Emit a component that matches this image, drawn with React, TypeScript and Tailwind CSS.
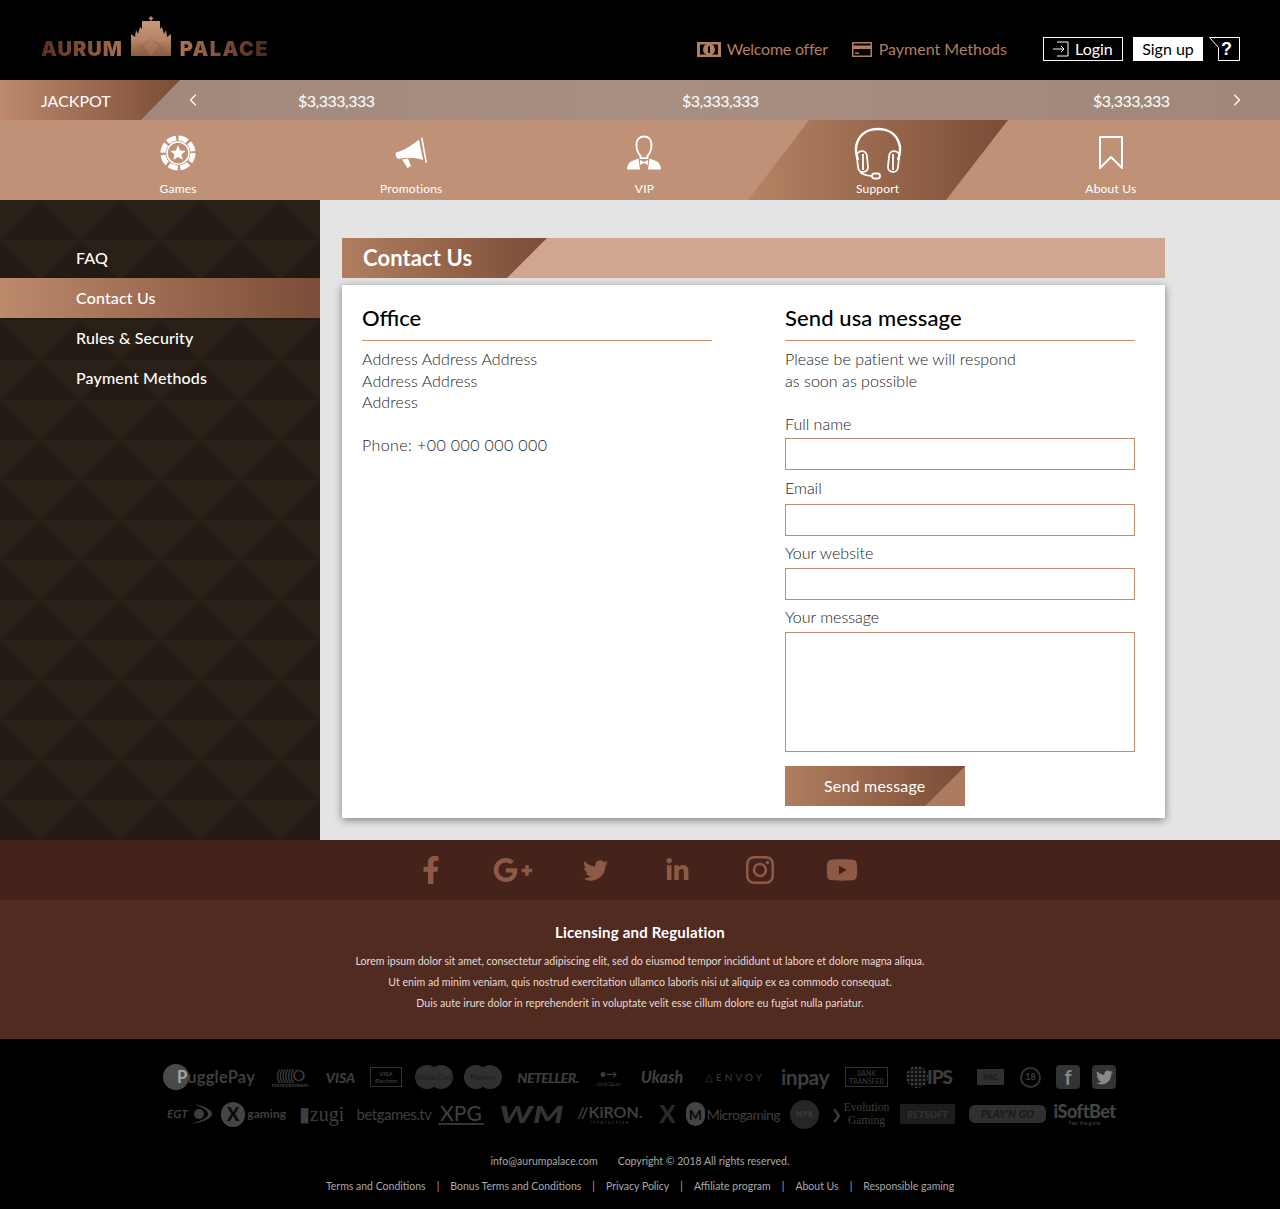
import type { ReactNode } from "react";
import { FaFacebookF, FaGooglePlusG, FaInstagram, FaLinkedinIn, FaTwitter, FaYoutube } from "react-icons/fa";
import { ChevronLeft, ChevronRight } from "lucide-react";

function Crown() {
  return (
    <svg width="40" height="41" viewBox="0 0 40 41" className="block">
      <defs>
        <linearGradient id="crown" x1="0" y1="0" x2="0" y2="1">
          <stop offset="0" stopColor="#c89878" />
          <stop offset="0.55" stopColor="#b58467" />
          <stop offset="1" stopColor="#8a5a42" />
        </linearGradient>
      </defs>
      <path d="M20 0l2.500 2.500-2 1.500v1.500h-1V4l-2-1.500z" fill="#b98a6c" />
      <path d="M11 5H29V13L31 11 33 18 35 14 36 21 40 18V40H0V18L4 21 5 14 7 18 9 11 11 13Z" fill="url(#crown)" />
      <path d="M20 22L34 32 30 40H10L6 32Z" fill="#8f5f46" opacity=".4" />
      <path d="M20 22L27 30 20 40 13 30Z" fill="#c79a7d" opacity=".25" />
    </svg>
  );
}

function Chip() {
  return (
    <svg width="36" height="36" viewBox="0 0 36 36">
      <circle cx="18" cy="18" r="15" fill="none" stroke="#fff" strokeWidth="5" strokeDasharray="9.300 2.500" />
      <circle cx="18" cy="18" r="11" fill="none" stroke="#fff" strokeWidth="1.500" />
      <circle cx="18" cy="18" r="9.500" fill="#bf9278" />
      <path d="M18 10.500l2.200 4.900 5.300.6-4 3.500 1.200 5.200-4.700-2.700-4.700 2.700 1.200-5.200-4-3.500 5.300-.6z" fill="#fff" />
    </svg>
  );
}

function Megaphone() {
  return (
    <svg width="34" height="32" viewBox="0 0 34 32">
      <path d="M2 15.500C8 14 16 10 25 2.500L29 23C21 20.500 12 20 4.500 22C2 20.500 1 18 2 15.500Z" fill="#fff" />
      <path d="M8 22.500L14 21.500 17 29 13.500 31Z" fill="#fff" />
      <path d="M27 1L28.500 .5 33 25.500 31.500 26Z" fill="#fff" />
    </svg>
  );
}

function Vip() {
  return (
    <svg width="36" height="36" viewBox="0 0 36 36">
      <path d="M18 1.500c4.500 0 7.500 3 7.500 8 0 5-1.500 9-4 11.500v2.200h-7V21c-2.500-2.500-4-6.500-4-11.500 0-5 3-8 7.500-8z" fill="none" stroke="#fff" strokeWidth="1.800" />
      <path d="M1 34.500c.5-5 2-7 5-8.500l6.500-2.500 1.500 11H1z" fill="#fff" />
      <path d="M35 34.500c-.5-5-2-7-5-8.500l-6.500-2.500-1.500 11h13z" fill="#fff" />
      <path d="M14 25l4 2 4-2v5l-4-2-4 2z" fill="#fff" />
    </svg>
  );
}

function Headset() {
  return (
    <svg width="48" height="53" viewBox="0 0 48 53">
      <path d="M4 33C1.500 26 1.500 20 3 16 6 7 14 2 24 2s18 5 21 14c1.500 4 1.500 10-1 17" fill="none" stroke="#fff" strokeWidth="2.400" />
      <rect x="3.500" y="24" width="10" height="21" rx="5" fill="none" stroke="#fff" strokeWidth="1.800" transform="rotate(-6 8.500 35)" />
      <path d="M9 27V43" stroke="#fff" strokeWidth="1.800" />
      <rect x="34.500" y="24" width="10" height="21" rx="5" fill="none" stroke="#fff" strokeWidth="1.800" transform="rotate(6 39.500 35)" />
      <path d="M39 27V43" stroke="#fff" strokeWidth="1.800" />
      <path d="M6 45c2 2.500 6 3.500 12 4" fill="none" stroke="#fff" strokeWidth="1.800" />
      <rect x="18" y="46.500" width="8" height="5" rx="2.500" fill="none" stroke="#fff" strokeWidth="1.800" />
    </svg>
  );
}

function Bookmark() {
  return (
    <svg width="26" height="36" viewBox="0 0 26 36">
      <path d="M2 2H24V33L13 22 2 33Z" fill="none" stroke="#fff" strokeWidth="2" strokeLinejoin="round" />
    </svg>
  );
}

const NAV = [
  { label: "Games", icon: <Chip /> },
  { label: "Promotions", icon: <Megaphone /> },
  { label: "VIP", icon: <Vip /> },
  { label: "Support", icon: <Headset />, active: true },
  { label: "About Us", icon: <Bookmark /> },
];

const SIDE = ["FAQ", "Contact Us", "Rules & Security", "Payment Methods"];

function Header() {
  return (
    <header className="flex h-20 bg-black pl-[41px] pr-10">
      <div className="mt-[16px] flex h-[41px] items-end">
        <span className="mb-[-2px] bg-gradient-to-r from-[#5a2f1f] to-[#a87050] bg-clip-text text-[20px] font-black leading-[20px] tracking-[1px] text-transparent [font-family:Inter,sans-serif]">AURUM</span>
        <span className="ml-[8px]"><Crown /></span>
        <span className="mb-[-2px] ml-[9px] bg-gradient-to-r from-[#ab7456] to-[#4a281b] bg-clip-text text-[20px] font-black leading-[20px] tracking-[1.400px] text-transparent [font-family:Inter,sans-serif]">PALACE</span>
      </div>
      <div className="ml-auto mt-[37px] flex h-6 items-center">
        <div className="flex items-center text-[16px] text-[#b07e60]">
          <svg width="24" height="15" viewBox="0 0 24 15" className="mr-[6px]">
            <rect width="24" height="15" fill="#b07e60" />
            <rect x="3" y="2.500" width="18" height="10" fill="#000" />
            <circle cx="12" cy="7.500" r="6" fill="#b07e60" />
            <path d="M11 4.500l2-.5v7h-2z" fill="#000" />
          </svg>
          <span className="tracking-[-.25px]">Welcome offer</span>
          <svg width="20" height="15" viewBox="0 0 20 15" className="ml-[24px] mr-[7px]">
            <rect width="20" height="15" fill="#b07e60" />
            <rect x="1.500" y="1.500" width="17" height="2" fill="#000" />
            <rect x="1.500" y="7" width="17" height="6.500" fill="#000" />
            <rect x="3" y="10.500" width="4" height="1.500" fill="#b07e60" />
          </svg>
          <span>Payment Methods</span>
        </div>
        <div className="ml-[36px] flex h-6 w-20 items-center border border-white text-white">
          <svg width="16" height="16" viewBox="0 0 16 16" className="ml-[9px] mr-[6px]">
            <path d="M4 1H15V15H4" fill="none" stroke="#fff" />
            <path d="M0 8H11M8 5l3 3-3 3" fill="none" stroke="#fff" />
          </svg>
          <span className="text-[16px]">Login</span>
        </div>
        <div className="ml-[10px] flex h-6 w-[70px] items-center justify-center bg-white text-[16px] text-black">Sign up</div>
        <div className="relative ml-[6px] flex h-6 w-[31px] items-center justify-end">
          <svg width="31" height="24" viewBox="0 0 31 24" className="absolute inset-0">
            <path d="M.5.5H30.500V23.500H9.500V10.500Z" fill="none" stroke="#fff" />
          </svg>
          <span className="relative mr-[8px] text-[18px] font-bold leading-[20px] text-white [font-family:'Liberation_Sans',sans-serif]">?</span>
        </div>
      </div>
    </header>
  );
}

function Ticker() {
  return (
    <div className="relative flex h-10 items-center bg-gradient-to-r from-[#a0877a] via-[#a78f82] to-[#a0877a] text-[16px] text-white">
      <div className="absolute inset-y-0 left-0 flex w-[180px] items-center bg-gradient-to-r from-[#bd8a6c] to-[#7b4c37] pl-[41px] pt-[1px] [clip-path:polygon(0_0,180px_0,141px_100%,0_100%)]">JACKPOT</div>
      <ChevronLeft size={20} strokeWidth={1.4} className="absolute left-[183px] top-[10px]" />
      <span className="absolute left-[298px] mt-[1px] tracking-[-.5px]">$3,333,333</span>
      <span className="absolute left-[682px] mt-[1px] tracking-[-.5px]">$3,333,333</span>
      <span className="absolute left-[1093px] mt-[1px] tracking-[-.5px]">$3,333,333</span>
      <ChevronRight size={20} strokeWidth={1.4} className="absolute left-[1227px] top-[10px]" />
    </div>
  );
}

function Nav() {
  return (
    <nav className="grid h-20 grid-cols-[repeat(5,233.200px)] bg-[#bf9278] pl-[61.500px] text-[12px] tracking-[.2px] text-white">
      {NAV.map((n) => (
        <div key={n.label} className="relative flex flex-col items-center pt-[5px]">
          {n.active && (
            <div className="absolute inset-y-0 left-[-13px] w-[260px] bg-gradient-to-r from-[#b58464] to-[#7b4c37] [clip-path:polygon(61px_0,260px_0,198px_100%,0_100%)]" />
          )}
          <div className="relative flex h-[56px] items-center justify-center">{n.icon}</div>
          <div className="relative leading-[16px]">{n.label}</div>
        </div>
      ))}
    </nav>
  );
}

function Sidebar() {
  return (
    <aside className="relative w-80 shrink-0 overflow-hidden bg-[#292018] pt-[38px]">
      <svg className="absolute inset-0 h-full w-full">
        <defs>
          <pattern id="tri" width="80" height="80" patternUnits="userSpaceOnUse">
            <rect width="80" height="80" fill="#292018" />
            <path d="M40 0L80 40H0Z" fill="#231a14" />
            <path d="M0 40L40 80H-40Z" fill="#231a14" />
            <path d="M80 40L120 80H40Z" fill="#231a14" />
            <path d="M40 0L80 40L40 80L0 40Z" fill="none" stroke="#2b221a" strokeWidth="1" />
          </pattern>
        </defs>
        <rect width="100%" height="100%" fill="url(#tri)" />
      </svg>
      <ul className="relative text-[16px] font-medium tracking-[.15px] text-white">
        {SIDE.map((s) => (
          <li key={s} className={"flex h-10 items-center pl-[76px] " + (s === "Contact Us" ? "bg-gradient-to-r from-[#bd8a6c] to-[#7b4c37]" : "")}>{s}</li>
        ))}
      </ul>
    </aside>
  );
}

function Field({ label, box }: { label: string; box: string }) {
  return (
    <div>
      <div className="text-[16px] font-light leading-[22px] text-[#222]">{label}</div>
      <div className={"block w-full border border-[#bf8a6c] bg-white " + box} />
    </div>
  );
}

function Contact() {
  return (
    <main className="flex-1 bg-[#e4e4e4] pl-[22px] pt-[38px]">
      <div className="relative h-10 w-[823px] bg-[#d0a691]">
        <div className="flex h-10 w-[205px] items-center bg-gradient-to-r from-[#b07f60] to-[#7b4c37] pb-[2px] pl-[21px] text-[22px] font-bold tracking-[.1px] text-white [clip-path:polygon(0_0,205px_0,165px_100%,0_100%)]">Contact Us</div>
      </div>
      <div className="mt-[7px] flex h-[533px] w-[823px] bg-white pl-5 pt-[18px] shadow-[0_2px_8px_rgba(0,0,0,.45)]">
        <div className="w-[350px]">
          <h2 className="h-[38px] border-b border-[#c98f6f] text-[22px] font-medium leading-[30px] text-black">Office</h2>
          <p className="mt-[7px] text-[16px] font-light leading-[21.600px] tracking-[.1px] text-[#222]">
            Address Address Address<br />Address Address<br />Address<br /><br /><span className="tracking-[.4px]">Phone: +00 000 000 000</span>
          </p>
        </div>
        <div className="ml-[73px] w-[350px]">
          <h2 className="h-[38px] border-b border-[#c98f6f] text-[22px] font-medium leading-[30px] tracking-[.1px] text-black">Send usa message</h2>
          <p className="mt-[7px] text-[16px] font-light leading-[21.600px] tracking-[.05px] text-[#222]">
            Please be patient we will respond<br />as soon as possible
          </p>
          <div className="mt-[22px]"><Field label="Full name" box="mt-[3px] h-[32px]" /></div>
          <div className="mt-[7px]"><Field label="Email" box="mt-[5px] h-[32px]" /></div>
          <div className="mt-[6px]"><Field label="Your website" box="mt-[4px] h-[32px]" /></div>
          <div className="mt-[6px]"><Field label="Your message" box="mt-[4px] h-[120px]" /></div>
          <div className="relative mt-[14px] flex h-10 w-[180px] items-center bg-gradient-to-r from-[#b07f60] to-[#7b4c37] pb-[1px] pl-[39px] text-[16px] tracking-[.2px] text-white">
            Send message
            <div className="absolute inset-0 bg-[#ad7c5e] [clip-path:polygon(180px_0,180px_100%,140px_100%)]" />
          </div>
        </div>
      </div>
    </main>
  );
}

function Social() {
  return (
    <div className="flex h-[60px] items-center justify-center bg-[#45231a] pr-[7px] text-[#8e5a45]">
      <div className="flex w-[82.400px] justify-center"><FaFacebookF size={28} /></div>
      <div className="flex w-[82.400px] justify-center"><FaGooglePlusG size={40} /></div>
      <div className="flex w-[82.400px] justify-center"><FaTwitter size={25} /></div>
      <div className="flex w-[82.400px] justify-center"><FaLinkedinIn size={25} /></div>
      <div className="flex w-[82.400px] justify-center"><FaInstagram size={32} /></div>
      <div className="flex w-[82.400px] justify-center"><FaYoutube size={32} /></div>
    </div>
  );
}

function Licensing() {
  return (
    <div className="h-[139px] bg-[#512a20] pt-[22px] text-center text-white">
      <div className="text-[15px] font-bold leading-[20px] tracking-[.2px]">Licensing and Regulation</div>
      <div className="mt-[9px] text-[10.600px] leading-[21px] text-[#e6dcd6]">
        <div>Lorem ipsum dolor sit amet, consectetur adipiscing elit, sed do eiusmod tempor incididunt ut labore et dolore magna aliqua.</div>
        <div>Ut enim ad minim veniam, quis nostrud exercitation ullamco laboris nisi ut aliquip ex ea commodo consequat.</div>
        <div>Duis aute irure dolor in reprehenderit in voluptate velit esse cillum dolore eu fugiat nulla pariatur.</div>
      </div>
    </div>
  );
}

function Logo({ cls, children }: { cls: string; children: ReactNode }) {
  return <div className={"flex shrink-0 items-center justify-center whitespace-nowrap " + cls}>{children}</div>;
}

function TwinCircles({ label }: { label: string }) {
  return (
    <span className="relative flex items-center justify-center">
      <span className="h-[24px] w-[24px] rounded-full bg-[#303030]" />
      <span className="ml-[-10px] h-[24px] w-[24px] rounded-full bg-[#303030]" />
      <span className="absolute text-[7px] text-[#1c1c1c]">{label}</span>
    </span>
  );
}

function Logos() {
  return (
    <div className="text-[#3e3e3e]">
      <div className="flex h-[36px] items-center pl-[162px]">
        <Logo cls="w-[94px]">
          <span className="relative flex items-center">
            <span className="h-[26px] w-[26px] rounded-full bg-[#4a4a4a]" />
            <span className="ml-[-12px] text-[16.500px] font-bold tracking-[.2px]"><span className="text-[#a5a5a5]">P</span>ugglePay</span>
          </span>
        </Logo>
        <Logo cls="ml-[13px] w-[42px] flex-col">
          <span className="text-[16px] leading-[15px] tracking-[-1.500px]">((((((O</span>
          <span className="text-[5.500px] font-bold leading-[6px]">moneybookers</span>
        </Logo>
        <Logo cls="ml-[14px] w-[31px] text-[14px] font-black italic">VISA</Logo>
        <Logo cls="ml-[14px] h-[20px] w-[32px] flex-col border border-[#333] text-[6px] font-bold leading-[7px]"><span>VISA</span><span>Electron</span></Logo>
        <Logo cls="ml-[13px] w-[38px]"><TwinCircles label="MasterCard" /></Logo>
        <Logo cls="ml-[11px] w-[38px]"><TwinCircles label="Maestro" /></Logo>
        <Logo cls="ml-[14px] w-[64px] text-[14px] font-black italic tracking-[-.5px]">NETELLER.</Logo>
        <Logo cls="ml-[12px] w-[33px] flex-col"><span className="text-[11px] font-bold leading-[12px]">•→</span><span className="text-[6px] leading-[7px]">click2pay</span></Logo>
        <Logo cls="ml-[12px] w-[50px] text-[16px] font-black italic">Ukash</Logo>
        <Logo cls="ml-[15px] w-[66px] text-[10px] tracking-[3px]">△ENVOY</Logo>
        <Logo cls="ml-[12px] w-[50px] text-[21px] font-bold tracking-[-.5px]">inpay</Logo>
        <Logo cls="ml-[15px] h-[20px] w-[43px] flex-col border border-[#333] text-[7px] leading-[8px]"><span>BANK</span><span>TRANSFER</span></Logo>
        <Logo cls="ml-[17px] w-[48px]">
          <span className="flex items-center">
            <span className="h-[22px] w-[22px] rounded-full bg-[radial-gradient(#444_1px,#111_1.500px)] bg-[length:4px_4px]" />
            <span className="ml-[-1px] text-[19px] font-black tracking-[-1px]">IPS</span>
          </span>
        </Logo>
        <Logo cls="ml-[24px] h-[16px] w-[27px] bg-[#303030] text-[7px] font-bold text-[#1a1a1a]">RNG</Logo>
        <Logo cls="ml-[16px] h-[21px] w-[21px] rounded-full border-2 border-[#333] text-[9px] font-bold">18</Logo>
        <Logo cls="ml-[15px] h-[24px] w-[24px] rounded-[4px] bg-[#333] text-[20px] font-bold text-[#888]">f</Logo>
        <Logo cls="ml-[12px] h-[24px] w-[24px] rounded-[4px] bg-[#333] text-[#888]"><FaTwitter size={17} /></Logo>
      </div>
      <div className="mt-[1px] flex h-[36px] items-center pl-[165px]">
        <Logo cls="w-[50px] text-[12px] font-bold italic">
          <span>EGT</span>
          <svg width="24" height="22" viewBox="0 0 24 22" className="ml-[1px]">
            <circle cx="10" cy="11" r="5" fill="#3e3e3e" />
            <path d="M0 21C12 20 23 16 23 11 23 6 14 3 6 1 13 5 19 7 19 11 19 15 10 19 0 21Z" fill="#3e3e3e" />
          </svg>
        </Logo>
        <Logo cls="ml-[6px] w-[65px]">
          <span className="flex h-[25px] w-[25px] items-center justify-center rounded-full bg-[#454545] text-[18px] font-black text-[#0a0a0a]">X</span>
          <span className="ml-[2px] text-[12px] font-bold">gaming</span>
        </Logo>
        <Logo cls="ml-[7px] w-[57px] text-[20px] [font-family:'Liberation_Serif',serif]">▮zugi</Logo>
        <Logo cls="ml-[8px] w-[72px] text-[15px] tracking-[-.5px]">betgames.tv</Logo>
        <Logo cls="ml-[8px] w-[46px] flex-col border-b-2 border-[#333] text-[21px] font-medium leading-[20px]">XPG</Logo>
        <Logo cls="ml-[13px] w-[68px] text-[23px] font-black italic text-[#333]"><span className="scale-x-150">WM</span></Logo>
        <Logo cls="ml-[10px] w-[70px] flex-col"><span className="text-[16px] font-bold leading-[15px]">//KiRON.</span><span className="text-[5px] leading-[6px] tracking-[1.500px]">interactive</span></Logo>
        <Logo cls="ml-[10px] w-[25px] text-[24px] font-black text-[#2a2a2a]">X</Logo>
        <Logo cls="ml-[6px] w-[94px]">
          <span className="flex h-[24px] w-[24px] items-center justify-center rounded-full bg-[#454545] text-[14px] font-bold text-[#0a0a0a]">M</span>
          <span className="ml-[2px] text-[14px] tracking-[-.6px]">Microgaming</span>
        </Logo>
        <Logo cls="ml-[10px] h-[29px] w-[29px] rounded-full bg-[#262626] text-[8px] font-bold">NYX</Logo>
        <Logo cls="ml-[9px] w-[64px] text-[11.500px] leading-[13px] [font-family:'Liberation_Serif',serif]">
          <span className="mr-[2px] text-[13px]">❯</span>
          <span className="text-center">Evolution<br />Gaming</span>
        </Logo>
        <Logo cls="ml-[8px] h-[20px] w-[55px] bg-[#1d1d1d] text-[10px] font-black italic text-[#333]">BETSOFT</Logo>
        <Logo cls="ml-[14px] h-[18px] w-[77px] rounded-[6px] bg-[#303030] text-[11px] font-black italic text-[#1a1a1a]">PLAY'N GO</Logo>
        <Logo cls="ml-[6px] w-[65px] flex-col text-[#444]"><span className="text-[18px] font-black leading-[17px] tracking-[-.5px]">iSoftBet</span><span className="text-[5px] leading-[6px]">Feel. the game</span></Logo>
      </div>
    </div>
  );
}

const LINKS = ["Terms and Conditions", "Bonus Terms and Conditions", "Privacy Policy", "Affiliate program", "About Us", "Responsible gaming"];

function Bottom() {
  return (
    <footer className="h-[170px] bg-black pt-[20px]">
      <Logos />
      <div className="mt-[22px] flex justify-center text-[10.500px] leading-[14px] text-[#a8a8a8]">
        <span>info@aurumpalace.com</span>
        <span className="ml-[20px]">Copyright © 2018 All rights reserved.</span>
      </div>
      <div className="mt-[11px] flex justify-center text-[10.500px] leading-[14px] text-[#a8a8a8]">
        {LINKS.map((l, i) => (
          <span key={l} className="flex">
            {i > 0 && <span className="mx-[11px]">|</span>}
            {l}
          </span>
        ))}
      </div>
    </footer>
  );
}

export default function App() {
  return (
    <div className="w-[1280px] [font-family:Lato,sans-serif]">
      <Header />
      <Ticker />
      <Nav />
      <div className="flex h-[640px]">
        <Sidebar />
        <Contact />
      </div>
      <Social />
      <Licensing />
      <Bottom />
    </div>
  );
}
